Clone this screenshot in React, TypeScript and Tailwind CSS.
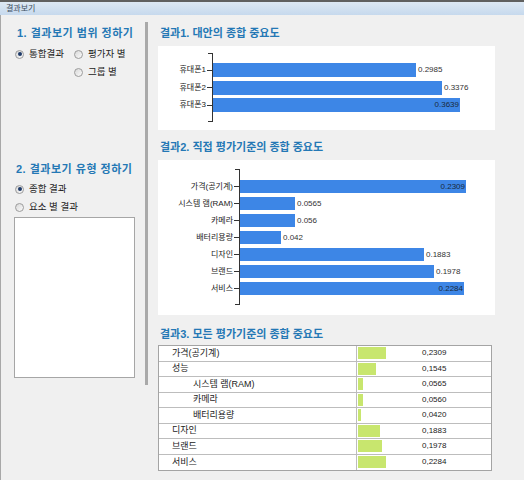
import React from "react";

type Row = { label: string; v: number; inside?: boolean };

function Radio({ checked }: { checked?: boolean }) {
  return (
    <span className="w-[9px] h-[9px] rounded-full border border-[#9c9c9c] bg-gradient-to-br from-[#d8d8d8] to-[#fbfbfb] flex items-center justify-center shrink-0">
      {checked && <span className="w-[4px] h-[4px] rounded-full bg-[#1e3a68]" />}
    </span>
  );
}

function RadioItem({ label, checked, cls }: { label: string; checked?: boolean; cls?: string }) {
  return (
    <div className={"flex items-center gap-[5px] h-[12px] " + (cls || "")}>
      <Radio checked={checked} />
      <span className="text-[9.5px] text-[#222] leading-none">{label}</span>
    </div>
  );
}

function Bar({ r, scale, barCls }: { r: Row; scale: number; barCls: string }) {
  const w = Math.round(r.v * scale);
  const txt = r.v.toString();
  return (
    <div className={"flex items-center " + barCls}>
      <div className="h-full bg-[#3d86e6] flex items-center justify-end shrink-0" style={{ width: w }}>
        {r.inside && <span className="text-[8px] text-[#1a2a3a] pr-[1px] leading-none">{txt}</span>}
      </div>
      {!r.inside && <span className="text-[8px] text-[#333] ml-[2px] leading-none">{txt}</span>}
    </div>
  );
}

function Heading({ children, cls }: { children: React.ReactNode; cls?: string }) {
  return (
    <div className={"h-[14px] flex items-center text-[11px] font-bold text-[#2478b5] leading-none whitespace-nowrap " + (cls || "")}>
      {children}
    </div>
  );
}

const chart1: Row[] = [
  { label: "휴대폰1", v: 0.2985 },
  { label: "휴대폰2", v: 0.3376 },
  { label: "휴대폰3", v: 0.3639, inside: true },
];

const chart2: Row[] = [
  { label: "가격(공기계)", v: 0.2309, inside: true },
  { label: "시스템 램(RAM)", v: 0.0565 },
  { label: "카메라", v: 0.056 },
  { label: "배터리용량", v: 0.042 },
  { label: "디자인", v: 0.1883 },
  { label: "브랜드", v: 0.1978 },
  { label: "서비스", v: 0.2284, inside: true },
];

const table = [
  { label: "가격(공기계)", val: "0,2309", w: 28, sub: false },
  { label: "성능", val: "0,1545", w: 18, sub: false },
  { label: "시스템 램(RAM)", val: "0,0565", w: 5, sub: true },
  { label: "카메라", val: "0,0560", w: 5, sub: true },
  { label: "배터리용량", val: "0,0420", w: 3, sub: true },
  { label: "디자인", val: "0,1883", w: 22, sub: false },
  { label: "브랜드", val: "0,1978", w: 24, sub: false },
  { label: "서비스", val: "0,2284", w: 28, sub: false },
];

export default function App() {
  return (
    <div className="w-[524px] h-[480px] overflow-hidden bg-[#f0f0f0] flex flex-col font-['Liberation_Sans','Noto_Sans_CJK_KR',sans-serif]">
      {/* title bar */}
      <div className="h-[15px] shrink-0 border-t-2 border-[#606060] bg-gradient-to-b from-[#dde8f4] to-[#c6d9ed] flex items-center pl-[6px]">
        <span className="text-[8px] text-[#3c4c5e] leading-none">결과보기</span>
      </div>

      <div className="flex-1 flex border-l border-[#a8a8a8]">
        {/* left column */}
        <div className="w-[144px] shrink-0 pl-[14px] flex flex-col">
          <Heading cls="mt-[11px] ml-[2px] tracking-[0.5px]">1. 결과보기 범위 정하기</Heading>
          <div className="flex mt-[8px]">
            <RadioItem label="통합결과" checked cls="w-[59px]" />
            <RadioItem label="평가자 별" />
          </div>
          <div className="flex mt-[6px] pl-[59px]">
            <RadioItem label="그룹 별" />
          </div>

          <Heading cls="mt-[84px] ml-[1px] tracking-[0.5px]">2. 결과보기 유형 정하기</Heading>
          <RadioItem label="종합 결과" checked cls="mt-[7px]" />
          <RadioItem label="요소 별 결과" cls="mt-[6px]" />
          <div className="mt-[4px] -ml-[1px] w-[121px] h-[161px] bg-white border border-[#a6a6a6]" />
        </div>

        {/* divider */}
        <div className="w-[2.5px] h-[363px] mt-[7px] bg-[#a9a9a9] shrink-0" />

        {/* right column */}
        <div className="ml-[10.5px] w-[337px] flex flex-col">
          <Heading cls="mt-[11px] ml-[2px]">결과1. 대안의 종합 중요도</Heading>
          <div className="mt-[6px] bg-white h-[84px] pt-[7px] flex">
            <div className="w-[54px] pt-[10px] shrink-0">
              {chart1.map((r) => (
                <div key={r.label} className="h-[17.5px]">
                  <div className="h-[14px] flex items-center justify-end">
                    <span className="text-[8px] text-[#222] leading-none whitespace-nowrap">{r.label}</span>
                    <span className="w-[5px] h-px bg-[#333] ml-[1px]" />
                  </div>
                </div>
              ))}
            </div>
            <div className="relative h-[69px] flex-1 border-l border-[#333] pt-[10px]">
              <span className="absolute -left-[5px] top-0 w-[5px] h-px bg-[#333]" />
              <span className="absolute -left-[5px] bottom-0 w-[5px] h-px bg-[#333]" />
              {chart1.map((r) => (
                <div key={r.label} className="h-[17.5px]">
                  <Bar r={r} scale={679} barCls="h-[14px]" />
                </div>
              ))}
            </div>
          </div>

          <Heading cls="mt-[10px] ml-[2px]">결과2. 직접 평가기준의 종합 중요도</Heading>
          <div className="mt-[6px] bg-white h-[155px] pt-[9px] flex">
            <div className="w-[81px] pt-[11px] shrink-0">
              {chart2.map((r) => (
                <div key={r.label} className="h-[17px]">
                  <div className="h-[13px] flex items-center justify-end">
                    <span className="text-[8px] text-[#222] leading-none whitespace-nowrap">{r.label}</span>
                    <span className="w-[5px] h-px bg-[#333] ml-[1px]" />
                  </div>
                </div>
              ))}
            </div>
            <div className="relative h-[136px] flex-1 border-l border-[#333] pt-[11px]">
              <span className="absolute -left-[5px] top-0 w-[5px] h-px bg-[#333]" />
              <span className="absolute -left-[5px] bottom-0 w-[5px] h-px bg-[#333]" />
              {chart2.map((r) => (
                <div key={r.label} className="h-[17px]">
                  <Bar r={r} scale={979} barCls="h-[13px]" />
                </div>
              ))}
            </div>
          </div>

          <Heading cls="mt-[12px] ml-[2px]">결과3. 모든 평가기준의 종합 중요도</Heading>
          <div className="mt-[4px] w-[334px] border border-[#a4a4a4] bg-white">
            {table.map((r, i) => (
              <div
                key={r.label}
                className={"flex h-[15.5px] " + (i < table.length - 1 ? "border-b border-[#bdbdbd]" : "")}
              >
                <div
                  className={
                    "w-[198px] shrink-0 border-r border-[#bdbdbd] flex items-center text-[9px] text-[#222] leading-none " +
                    (r.sub ? "pl-[34px]" : "pl-[13px]")
                  }
                >
                  {r.label}
                </div>
                <div className="flex items-start pt-[1px] pl-[1px]">
                  <div className="w-[64px] h-[12px] shrink-0">
                    <div className="h-full bg-[#c8e66e]" style={{ width: r.w }} />
                  </div>
                  <span className="text-[8px] text-[#222] leading-[12px]">{r.val}</span>
                </div>
              </div>
            ))}
          </div>
        </div>
      </div>
    </div>
  );
}
